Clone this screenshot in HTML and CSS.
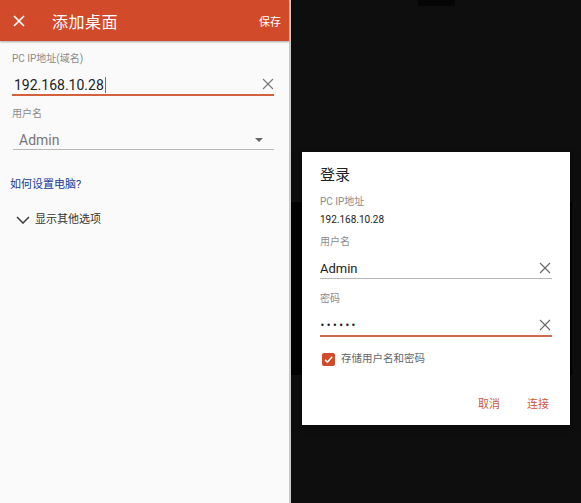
FILE: index.html
```html
<!DOCTYPE html>
<html lang="zh-CN">
<head>
<meta charset="utf-8">
<title>添加桌面</title>
<link rel="stylesheet" href="styles.css">
</head>
<body>
<div class="screen">
  <section class="left">
    <header class="appbar">
      <svg class="close" width="12" height="12" viewBox="0 0 12 12"><path d="M1 1L11 11M11 1L1 11" stroke="#fff" stroke-width="1.7" fill="none"/></svg>
      <span class="title">添加桌面</span>
      <span class="save">保存</span>
    </header>
    <div class="form">
      <div class="label">PC IP地址(域名)</div>
      <div class="field field-active">
        <span class="value">192.168.10.28<span class="caret"></span></span>
        <svg class="clear" width="12" height="12" viewBox="0 0 12 12"><path d="M1 1L11 11M11 1L1 11" stroke="#777" stroke-width="1.1" fill="none"/></svg>
      </div>
      <div class="label label-gap">用户名</div>
      <div class="field field-select">
        <span class="value value-muted">Admin</span>
        <span class="triangle"></span>
      </div>
      <a class="link">如何设置电脑?</a>
      <div class="more">
        <svg class="chev" width="14" height="8" viewBox="0 0 14 8"><path d="M1 1L7 7L13 1" stroke="#444" stroke-width="1.6" fill="none"/></svg>
        <span>显示其他选项</span>
      </div>
    </div>
  </section>
  <section class="right">
    <div class="notch"></div>
    <div class="band"></div>
    <div class="dialog">
      <div class="d-title">登录</div>
      <div class="d-label">PC IP地址</div>
      <div class="d-text">192.168.10.28</div>
      <div class="d-label d-gap">用户名</div>
      <div class="d-field">
        <span class="d-value">Admin</span>
        <svg class="clear" width="12" height="12" viewBox="0 0 12 12"><path d="M1 1L11 11M11 1L1 11" stroke="#666" stroke-width="1.1" fill="none"/></svg>
      </div>
      <div class="d-label d-gap2">密码</div>
      <div class="d-field d-field-active">
        <span class="d-dots">••••••</span>
        <svg class="clear" width="12" height="12" viewBox="0 0 12 12"><path d="M1 1L11 11M11 1L1 11" stroke="#666" stroke-width="1.1" fill="none"/></svg>
      </div>
      <div class="check-row">
        <span class="checkbox"><svg width="13" height="13" viewBox="0 0 13 13"><path d="M3 6.8L5.4 9.2L10.2 3.8" stroke="#fff" stroke-width="1.6" fill="none"/></svg></span>
        <span class="check-text">存储用户名和密码</span>
      </div>
      <div class="actions">
        <span class="btn">取消</span>
        <span class="btn">连接</span>
      </div>
    </div>
  </section>
</div>
</body>
</html>
```
FILE: styles.css
```css
* { box-sizing: border-box; }
html, body { margin: 0; padding: 0; }
body {
  width: 581px;
  height: 503px;
  overflow: hidden;
  font-family: Roboto, "Noto Sans CJK SC", sans-serif;
  background: #0e0e0e;
}
.screen {
  display: flex;
  width: 581px;
  height: 503px;
}
.left {
  width: 291px;
  height: 503px;
  background: #fafafa;
  border-right: 2px solid #c9c9c9;
  flex: none;
}
.appbar {
  height: 41px;
  background: #d14a29;
  display: flex;
  align-items: center;
  padding: 0 8px 0 13px;
  color: #fff;
  box-shadow: 0 1px 2px rgba(0,0,0,0.35);
}
.close { flex: none; }
.title {
  margin-left: 27px;
  font-size: 16px;
  flex: 1;
  letter-spacing: 0.5px;
}
.save { font-size: 11px; }
.form {
  padding: 11px 15px 0 12px;
}
.label {
  font-size: 10px;
  line-height: 14px;
  color: #8a8a8a;
}
.label-gap { margin-top: 11px; }
.field {
  display: flex;
  align-items: center;
  padding-top: 10px;
  height: 30px;
  border-bottom: 2px solid #d3603f;
}
.field .value {
  flex: 1;
  font-size: 14px;
  line-height: 18px;
  color: #222;
  padding-left: 2px;
}
.caret {
  display: inline-block;
  width: 1.5px;
  height: 16px;
  background: #c94a2c;
  vertical-align: -3px;
  margin-left: 1px;
}
.field .clear { margin-top: -2px; }
.field-select {
  height: 29px;
  margin-left: 1px;
  border-bottom: 1px solid #b8b8b8;
}
.value-muted { color: #777 !important; padding-left: 6px !important; }
.triangle {
  width: 0;
  height: 0;
  border-left: 4px solid transparent;
  border-right: 4px solid transparent;
  border-top: 4px solid #666;
  margin-right: 11px;
}
.link {
  display: block;
  margin-top: 28px;
  margin-left: -2px;
  font-size: 11px;
  line-height: 14px;
  color: #22389a;
}
.more {
  display: flex;
  align-items: center;
  margin-top: 21px;
  margin-left: 4px;
  font-size: 11px;
  line-height: 14px;
  color: #333;
}
.chev { margin-right: 5px; }

.right {
  flex: 1;
  position: relative;
  background: #0e0e0e;
}
.notch {
  position: absolute;
  left: 127px;
  top: 0;
  width: 37px;
  height: 6px;
  background: #050505;
}
.band {
  position: absolute;
  left: 0;
  top: 202px;
  width: 281px;
  height: 173px;
  background: #000;
}
.dialog {
  position: absolute;
  left: 11px;
  top: 152px;
  width: 268px;
  height: 273px;
  background: #fff;
  padding: 13px 18px 0 18px;
  box-shadow: 0 2px 6px rgba(0,0,0,0.5);
}
.d-title {
  font-size: 15px;
  line-height: 20px;
  color: #222;
}
.d-label {
  font-size: 10px;
  line-height: 14px;
  color: #8a8a8a;
  margin-top: 10px;
}
.d-text {
  font-size: 10px;
  line-height: 14px;
  color: #222;
  margin-top: 4px;
}
.d-gap { margin-top: 8px; }
.d-field {
  display: flex;
  align-items: center;
  height: 30px;
  padding-top: 10px;
  border-bottom: 1px solid #b8b8b8;
}
.d-value {
  flex: 1;
  font-size: 13px;
  line-height: 18px;
  color: #222;
}
.d-field .clear { margin-right: 1px; margin-top: -2px; }
.d-gap2 { margin-top: 13px; }
.d-field-active {
  height: 31px;
  padding-top: 10px;
  border-bottom: 2px solid #d06a4c;
}
.d-dots {
  flex: 1;
  font-family: "DejaVu Sans", sans-serif;
  font-size: 8px;
  line-height: 18px;
  color: #222;
  letter-spacing: 1.5px;
}
.check-row {
  display: flex;
  align-items: center;
  margin-top: 15px;
  margin-left: 2px;
}
.checkbox {
  width: 13px;
  height: 13px;
  border-radius: 2px;
  background: #d14a29;
  display: flex;
}
.check-text {
  margin-left: 6px;
  font-size: 10.5px;
  line-height: 14px;
  color: #666;
}
.actions {
  display: flex;
  justify-content: flex-end;
  gap: 27px;
  margin-top: 32px;
  padding-right: 3px;
}
.btn {
  font-size: 11px;
  line-height: 14px;
  color: #c9583a;
}
```
